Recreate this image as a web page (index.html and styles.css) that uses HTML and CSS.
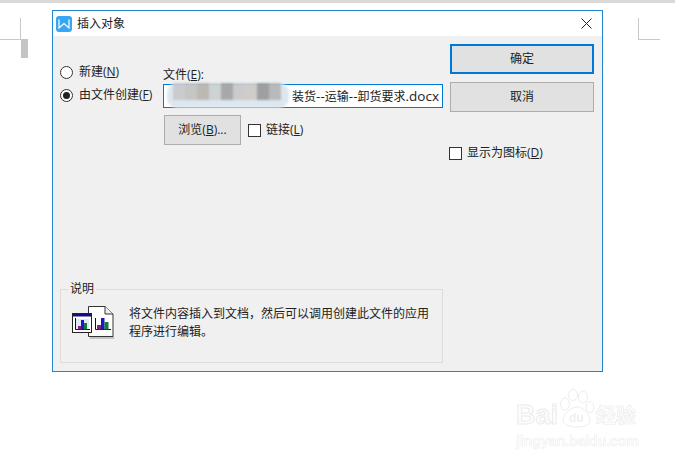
FILE: index.html
```html
<!DOCTYPE html>
<html lang="zh-CN">
<head>
<meta charset="utf-8">
<title>插入对象</title>
<link rel="stylesheet" href="styles.css">
</head>
<body>
<div class="topbar"></div>
<div class="mark mark-left"><i class="mark-block"></i></div>
<div class="mark mark-right"></div>
<div class="dialog">
  <header class="titlebar">
    <svg class="app-icon" width="16" height="16" viewBox="0 0 16 16"><rect width="16" height="16" rx="3" fill="#37a6f5"/><path d="M3 3.500V12L8 7.500 13 12V3.500" fill="none" stroke="#fff" stroke-width="1.200"/></svg>
    <span class="title">插入对象</span>
    <svg class="close" width="11" height="11" viewBox="0 0 11 11"><path d="M.5.5l10 10M10.500.5l-10 10" stroke="#222" stroke-width="1" fill="none"/></svg>
  </header>
  <div class="content">
    <div class="left">
      <div class="source">
        <div class="radios">
          <label class="radio"><span class="dot"></span><span>新建(<u>N</u>)</span></label>
          <label class="radio"><span class="dot on"></span><span>由文件创建(<u>F</u>)</span></label>
        </div>
        <div class="file">
          <div class="file-label">文件(<u>E</u>):</div>
          <div class="input">
            <span class="input-text">装货<span class="lat">--</span>运输<span class="lat">--</span>卸货要求<span class="lat">.docx</span></span>
            <div class="blur"><i class="b1"></i><i class="b6"></i><i class="b2"></i><i class="b3"></i><i class="b4"></i><i class="b1"></i><i class="b7"></i><i class="b5"></i><i class="b8"></i></div>
          </div>
          <div class="browse-row">
            <button class="btn browse">浏览(<u>B</u>)...</button>
            <label class="check"><span class="box"></span><span>链接(<u>L</u>)</span></label>
          </div>
        </div>
      </div>
      <fieldset class="group">
        <legend>说明</legend>
        <svg class="doc-icon" width="42" height="34" viewBox="0 0 42 34">
          <path d="M16.500 1.500H33L41 9V31.500H16.500Z" fill="#fff" stroke="#333"/>
          <path d="M33 1.500V9H41" fill="#eee" stroke="#333"/>
          <path d="M18 33H42V10" fill="none" stroke="#999"/>
          <rect x=".5" y="8.500" width="19" height="19" fill="#fff" stroke="#222"/>
          <rect x="1" y="9" width="18" height="2.500" fill="#10107f"/>
          <rect x="4" y="14" width="13" height="11" fill="#dfe8f5"/>
          <path d="M3.500 13V24.500H18" fill="none" stroke="#111"/>
          <rect x="6" y="21" width="3" height="3.500" fill="#8a1a8a"/><rect x="9" y="15" width="3" height="9.500" fill="#1818c8"/><rect x="12" y="18" width="3" height="6.500" fill="#157a3a"/>
          <path d="M23.500 13V24.500H39" fill="none" stroke="#111"/>
          <rect x="25" y="20" width="4" height="4.500" fill="#8a1a8a"/><rect x="29" y="13" width="3.500" height="11.500" fill="#1818c8"/><rect x="32.500" y="17" width="4" height="7.500" fill="#157a3a"/>
        </svg>
        <p class="desc">将文件内容插入到文档，然后可以调用创建此文件的应用程序进行编辑。</p>
      </fieldset>
    </div>
    <div class="right">
      <button class="btn primary">确定</button>
      <button class="btn cancel">取消</button>
      <label class="check show-icon"><span class="box"></span><span>显示为图标(<u>D</u>)</span></label>
    </div>
  </div>
</div>
<div class="watermark">
  <div class="wm-top">
    <span class="wm-bai">Bai</span>
    <svg class="paw" width="36" height="39" viewBox="0 0 36 39" fill="none" stroke="#ebebeb" stroke-width="1"><ellipse cx="6" cy="15" rx="4.500" ry="6"/><ellipse cx="14" cy="6" rx="4.500" ry="5.500"/><ellipse cx="24" cy="8" rx="4.500" ry="6"/><ellipse cx="31" cy="18" rx="4" ry="5.500"/><path d="M4 31c0-6 8-13 14-13s13 7 13 13c0 5-6 7-13 7S4 36 4 31Z"/><text x="10" y="33" class="wm-du">du</text></svg>
    <span class="wm-cn">经验</span>
  </div>
  <div class="wm-url">jingyan.baidu.com</div>
</div>
</body>
</html>
```
FILE: styles.css
```css
* { box-sizing: border-box; }
html, body { margin: 0; height: 463px; overflow: hidden; }
body {
  position: relative;
  background: #fff;
  font-family: "Open Sans", "Noto Sans CJK SC", sans-serif;
  font-size: 12px;
  line-height: 16px;
  color: #222;
}
u { text-underline-offset: 1px; }
.topbar { height: 3px; background: #d9d9d9; }

.mark { position: absolute; top: 18px; width: 22px; height: 22px; }
.mark-left { left: 0; border-right: 1px solid #c8c8c8; border-bottom: 1px solid #c8c8c8; width: 21px; }
.mark-right { left: 638px; border-left: 1px solid #c8c8c8; border-bottom: 1px solid #c8c8c8; }
.mark-block { position: absolute; left: 21px; top: 21px; width: 7px; height: 19px; background: #c4c4c4; }

.dialog {
  width: 551px;
  height: 362px;
  margin: 7px 0 0 52px;
  border: 1px solid #1f86d6;
  background: #f0f0f0;
  display: flex;
  flex-direction: column;
}
.titlebar {
  height: 25px;
  flex: none;
  background: #fff;
  display: flex;
  align-items: center;
  padding: 0 0 0 3px;
}
.app-icon { flex: none; }
.title { margin-left: 5px; flex: 1; }
.close { margin-right: 10px; }

.content { flex: 1; display: flex; padding: 8px 8px 8px 7px; }
.left { width: 383px; display: flex; flex-direction: column; }
.right { margin-left: 7px; width: 144px; display: flex; flex-direction: column; }

.source { display: flex; padding-top: 19px; flex: 1; }
.radios { width: 103px; display: flex; flex-direction: column; gap: 7px; padding-top: 1px; }
.radio, .check { display: flex; align-items: center; white-space: nowrap; }
.radio { gap: 6px; height: 16px; }
.dot {
  width: 13px; height: 13px; flex: none;
  border: 1px solid #333; border-radius: 50%; background: #fff;
  display: flex; align-items: center; justify-content: center;
}
.dot.on::after { content: ""; width: 7px; height: 7px; border-radius: 50%; background: #222; }

.file { flex: 1; }
.file-label { height: 20px; margin-top: 4px; }
.input {
  position: relative;
  height: 24px;
  margin-top: -3px;
  border: 1px solid #0078d7;
  background: #fff;
  display: flex;
  align-items: center;
  justify-content: flex-end;
  padding-right: 3px;
}
.input-text { white-space: nowrap; }
.lat { font-size: 13.5px; }
.blur {
  position: absolute;
  left: 3px; top: -2px; bottom: -1px;
  width: 122px;
  display: flex;
  padding: 0 8px 0 6px;
  background: #dde7f0;
  border-radius: 10px;
  filter: blur(1px);
  align-items: flex-start;
}
.blur i { flex: 1; height: 17px; }
.blur i.b1 { background: #cbcbcd; }
.blur i.b2 { background: #bcb9b3; }
.blur i.b3 { background: #cdd2d2; }
.blur i.b4 { background: #a8a8aa; }
.blur i.b5 { background: #9f9fa2; }
.blur i.b6 { background: #c5c5c5; }
.blur i.b7 { background: #cfcdc9; }
.blur i.b8 { background: #b9b9bb; }

.browse-row { display: flex; align-items: center; margin-top: 7px; gap: 7px; padding-left: 1px; }
.btn {
  font: inherit;
  color: inherit;
  background: #e1e1e1;
  border: 1px solid #adadad;
  padding: 0;
}
.browse { width: 77px; height: 30px; }
.check { gap: 5px; }
.box { width: 13px; height: 13px; flex: none; border: 1px solid #333; background: #fff; }

.primary { height: 30px; border: 2px solid #0078d7; }
.cancel { height: 30px; margin-top: 8px; }
.show-icon { margin: 33px 0 0 -1px; }

.group {
  margin: 0;
  height: 82px;
  flex: none;
  border: 1px solid #dcdcdc;
  padding: 8px 0 0 0;
  display: flex;
  align-items: flex-start;
}
legend { margin-left: 7px; padding: 0 2px; line-height: 16px; }
.doc-icon { flex: none; margin-left: 11px; }
.desc { margin: 0 0 0 15px; width: 301px; line-height: 18px; }

.watermark {
  position: absolute;
  left: 516px;
  top: 390px;
  color: #fcfcfc;
  font-family: "Liberation Sans", sans-serif;
  filter: blur(0.4px);
}
.wm-top { display: flex; align-items: flex-end; height: 38px; }
.wm-bai { font-size: 27px; line-height: 26px; font-weight: 700; -webkit-text-stroke: 1px #ebebeb; }
.paw { flex: none; margin-left: 1px; }
.wm-du { font-size: 12px; font-weight: 700; fill: #efefef; stroke: none; }
.wm-cn { font-family: "Noto Sans CJK SC", sans-serif; font-size: 20px; line-height: 26px; font-weight: 700; margin-left: 1px; -webkit-text-stroke: 0.6px #ebebeb; }
.wm-url { font-size: 14px; line-height: 16px; font-weight: 700; margin-top: 5px; -webkit-text-stroke: 0.6px #efefef; }
```
